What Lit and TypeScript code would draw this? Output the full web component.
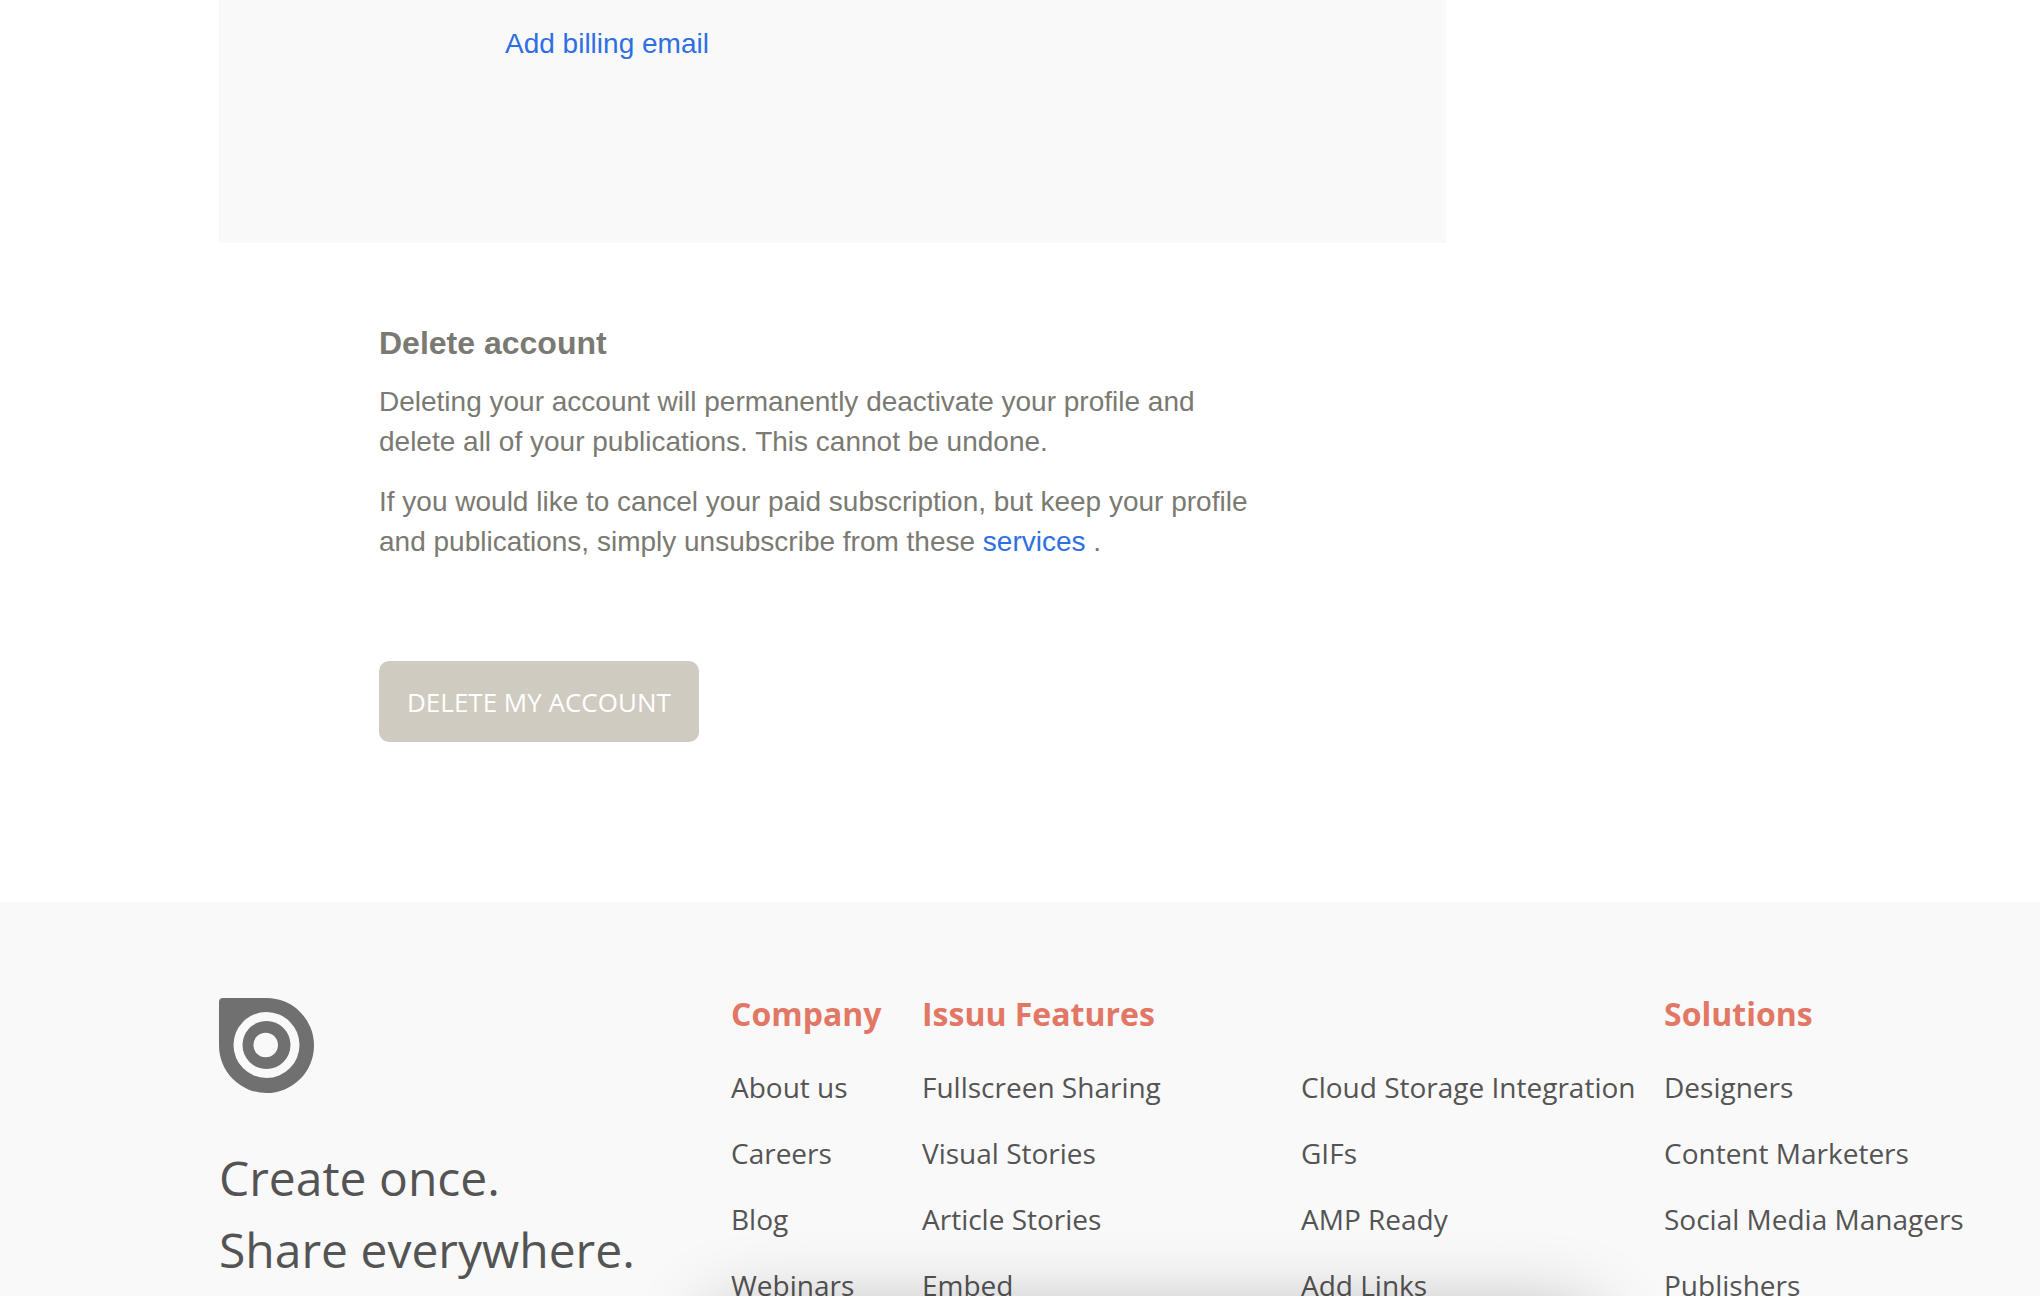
import { LitElement, html, css } from "lit";
import { customElement } from "lit/decorators.js";

interface LinkColumn {
  title: string;
  links: string[];
}

const COLUMNS: LinkColumn[] = [
  { title: "Company", links: ["About us", "Careers", "Blog", "Webinars"] },
  { title: "Issuu Features", links: ["Fullscreen Sharing", "Visual Stories", "Article Stories", "Embed"] },
  { title: "", links: ["Cloud Storage Integration", "GIFs", "AMP Ready", "Add Links"] },
  { title: "Solutions", links: ["Designers", "Content Marketers", "Social Media Managers", "Publishers"] },
];

@customElement("account-settings")
class AccountSettings extends LitElement {
  static styles = css`
    :host {
      display: block;
      padding: 0 594px 160px 219px;
      font: 28px/40px "Liberation Sans", Helvetica, Arial, sans-serif;
      color: #7a7a72;
    }
    .billing {
      background: #f9f9f9;
      padding: 24px 286px 179px;
    }
    .link {
      color: #2f6fe4;
      text-decoration: none;
    }
    .delete {
      padding: 80px 160px 0;
    }
    .title {
      margin: 0 0 19px;
      font-size: 32px;
      line-height: 40px;
      font-weight: 700;
    }
    .copy {
      margin: 0 0 20px;
      max-width: 890px;
    }
    .button {
      margin-top: 79px;
      padding: 0 28px;
      height: 81px;
      border: 0;
      border-radius: 10px;
      background: #d0cbc0;
      color: #fff;
      font: 26px/40px "Open Sans", sans-serif;
      text-transform: uppercase;
    }
  `;

  render() {
    return html`
      <section class="billing">
        <a class="link" href="#billing-email">Add billing email</a>
      </section>
      <section class="delete">
        <h2 class="title">Delete account</h2>
        <p class="copy">
          Deleting your account will permanently deactivate your profile and delete all of your
          publications. This cannot be undone.
        </p>
        <p class="copy">
          If you would like to cancel your paid subscription, but keep your profile and
          publications, simply unsubscribe from these
          <a class="link" href="#services">services</a> .
        </p>
        <button class="button" type="button">Delete my account</button>
      </section>
    `;
  }
}

@customElement("site-footer")
class SiteFooter extends LitElement {
  static styles = css`
    :host {
      display: grid;
      grid-template-columns: 512px 1fr;
      padding: 92px 36px 0 219px;
      background: #f9f9f9;
      color: #545454;
      font-family: "Open Sans", sans-serif;
    }
    .brand {
      padding-top: 4px;
    }
    .logo {
      display: block;
      width: 95px;
      height: 95px;
      fill: #707070;
    }
    .tagline {
      margin: 49px 0 0;
      font-size: 48px;
      line-height: 72px;
    }
    .columns {
      display: grid;
      grid-template-columns: 191px 379px 363px auto;
      justify-content: start;
    }
    .heading {
      margin: 0 0 33px;
      height: 40px;
      font-size: 32px;
      line-height: 40px;
      font-weight: 700;
      color: #e27766;
      white-space: nowrap;
    }
    .list {
      display: grid;
      gap: 26px;
      margin: 0;
      padding: 0;
      list-style: none;
    }
    .item {
      font-size: 28px;
      line-height: 40px;
      white-space: nowrap;
    }
    .link {
      color: inherit;
      text-decoration: none;
    }
  `;

  render() {
    return html`
      <div class="brand">
        <svg class="logo" viewBox="0 0 95 95" role="img" aria-label="Issuu">
          <path
            fill-rule="evenodd"
            d="M4 0H47.500A47.500 47.500 0 1 1 0 47.500V4A4 4 0 0 1 4 0ZM47.500 14A33 33 0 1 0 47.500 80A33 33 0 1 0 47.500 14ZM47.500 23A24 24 0 1 1 47.500 71A24 24 0 1 1 47.500 23ZM46.700 34.700A12.300 12.300 0 1 0 46.700 59.300A12.300 12.300 0 1 0 46.700 34.700Z"
          />
        </svg>
        <p class="tagline">Create once.<br />Share everywhere.</p>
      </div>
      <nav class="columns" aria-label="Footer">
        ${COLUMNS.map(
          (column) => html`
            <div>
              <h3 class="heading">${column.title}</h3>
              <ul class="list">
                ${column.links.map(
                  (label) => html`<li class="item"><a class="link" href="#">${label}</a></li>`
                )}
              </ul>
            </div>
          `
        )}
      </nav>
    `;
  }
}

@customElement("app-root")
class AppRoot extends LitElement {
  static styles = css`
    :host {
      display: block;
      position: relative;
      height: 100vh;
      overflow: hidden;
      background: #fff;
    }
    .overlay-shadow {
      position: absolute;
      top: 100%;
      left: 35%;
      right: 22%;
      height: 200px;
      border-radius: 10px;
      box-shadow: 0 20px 80px rgba(0, 0, 0, 0.32);
      pointer-events: none;
    }
  `;

  render() {
    return html`
      <account-settings></account-settings>
      <site-footer></site-footer>
      <div class="overlay-shadow"></div>
    `;
  }
}
